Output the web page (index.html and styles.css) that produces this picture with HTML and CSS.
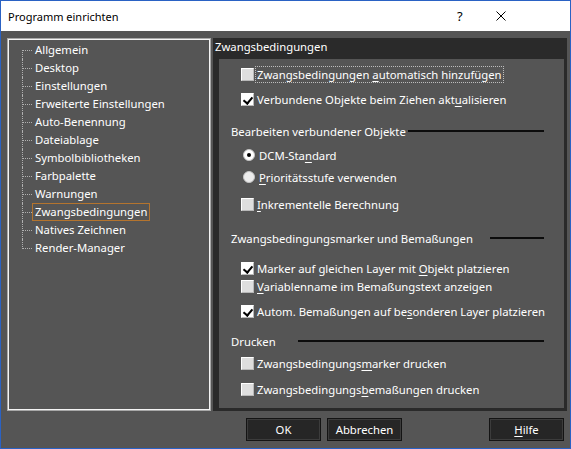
FILE: index.html
```html
<!DOCTYPE html>
<html lang="de">
<head>
<meta charset="utf-8">
<title>Programm einrichten</title>
<link rel="stylesheet" href="styles.css">
</head>
<body>
<div class="window">
  <div class="titlebar">
    <span class="title">Programm einrichten</span>
    <span class="help">?</span>
    <span class="close">
      <svg width="10" height="10" viewBox="0 0 10 10"><path d="M0.5 0.5 L9.5 9.5 M9.5 0.5 L0.5 9.5" stroke="#000" stroke-width="1" fill="none"/></svg>
    </span>
  </div>
  <div class="client">
    <div class="main">
      <div class="tree">
        <ul class="nodes">
          <li><span class="node">Allgemein</span></li>
          <li><span class="node">Desktop</span></li>
          <li><span class="node">Einstellungen</span></li>
          <li><span class="node">Erweiterte Einstellungen</span></li>
          <li><span class="node">Auto-Benennung</span></li>
          <li><span class="node">Dateiablage</span></li>
          <li><span class="node">Symbolbibliotheken</span></li>
          <li><span class="node">Farbpalette</span></li>
          <li><span class="node">Warnungen</span></li>
          <li><span class="node selected">Zwangsbedingungen</span></li>
          <li><span class="node">Natives Zeichnen</span></li>
          <li><span class="node">Render-Manager</span></li>
        </ul>
      </div>
      <div class="page">
        <div class="page-title">Zwangsbedingungen</div>
        <div class="page-body">
          <label class="opt r1"><span class="box"></span><span class="txt focus">Zwangsbedingungen <u>a</u>utomatisch hinzufügen</span></label>
          <label class="opt r2"><span class="box checked"></span><span class="txt">Verbundene Objekte beim Ziehen akt<u>u</u>alisieren</span></label>

          <div class="group g1"><span class="glabel">Bearbeiten verbundener Objekte</span><span class="rule rule-1"></span></div>
          <label class="opt r3"><span class="radio on"></span><span class="txt">DCM-Sta<u>n</u>dard</span></label>
          <label class="opt r4"><span class="radio"></span><span class="txt"><u>P</u>rioritätsstufe verwenden</span></label>
          <label class="opt r5"><span class="box"></span><span class="txt"><u>I</u>nkrementelle Berechnung</span></label>

          <div class="group g2"><span class="glabel">Zwangsbedingungsmarker und Bemaßungen</span><span class="rule rule-2"></span></div>
          <label class="opt r6"><span class="box checked"></span><span class="txt">Marker auf gleichen Layer mit <u>O</u>bjekt platzieren</span></label>
          <label class="opt r7"><span class="box"></span><span class="txt"><u>V</u>ariablenname im Bemaßungstext anzeigen</span></label>
          <label class="opt r8"><span class="box checked"></span><span class="txt">Autom. Bemaßungen auf be<u>s</u>onderen Layer platzieren</span></label>

          <div class="group g3"><span class="glabel">Drucken</span><span class="rule rule-3"></span></div>
          <label class="opt r9"><span class="box"></span><span class="txt">Zwangsbedingungs<u>m</u>arker drucken</span></label>
          <label class="opt r10"><span class="box"></span><span class="txt">Zwangsbedingungs<u>b</u>emaßungen drucken</span></label>
        </div>
      </div>
    </div>
    <div class="buttons">
      <button class="btn btn-ok">OK</button>
      <button class="btn">Abbrechen</button>
      <button class="btn btn-help"><u>H</u>ilfe</button>
    </div>
  </div>
</div>
</body>
</html>
```

FILE: styles.css
```css
* { box-sizing: border-box; }

html, body {
  margin: 0;
  padding: 0;
  background: #555555;
}

body {
  font-family: "Noto Sans", "Liberation Sans", sans-serif;
  font-size: 11.3px;
  color: #ffffff;
}

.window {
  width: 571px;
  height: 449px;
  border: 1px solid #2a62c4;
  display: flex;
  flex-direction: column;
  background: #555555;
}

/* title bar */
.titlebar {
  height: 30px;
  background: #ffffff;
  color: #000000;
  display: flex;
  align-items: center;
  padding-left: 7px;
  flex-shrink: 0;
}
.title { flex: 1; font-size: 11px; }
.help { width: 12px; font-size: 13px; margin-right: 27px; }
.close { width: 10px; height: 10px; margin-right: 64px; display: flex; }
.close svg { display: block; }

/* client area */
.client {
  flex: 1;
  display: flex;
  flex-direction: column;
  padding: 7px 3px 0 6px;
}
.main {
  height: 373px;
  display: flex;
  gap: 2px;
}

/* navigation tree */
.tree {
  width: 205px;
  border: 1px solid #a8a8a8;
  box-shadow: inset 0 0 0 1px #f4f4f4;
  padding: 2px 0 0 2px;
}
.nodes {
  list-style: none;
  margin: 0;
  padding: 0;
}
.nodes li {
  position: relative;
  height: 18px;
  display: flex;
  align-items: center;
  padding-left: 22px;
}
/* horizontal connector */
.nodes li::before {
  content: "";
  position: absolute;
  left: 12px;
  top: 9px;
  width: 10px;
  border-top: 1px dotted #b0b0b0;
}
/* vertical connector */
.nodes li::after {
  content: "";
  position: absolute;
  left: 12px;
  top: 0;
  height: 18px;
  border-left: 1px dotted #b0b0b0;
}
.nodes li:first-child::after { top: 9px; height: 9px; }
.nodes li:last-child::after { height: 10px; }

.node {
  display: inline-block;
  height: 18px;
  line-height: 16px;
  padding: 0 2px;
  border: 1px solid transparent;
  white-space: nowrap;
}
.node.selected { border-color: #b4742e; }

/* property page */
.page {
  width: 354px;
  background: #2a2a2a;
  display: flex;
  flex-direction: column;
  padding: 0 3px 3px 6px;
}
.page-title {
  height: 21px;
  line-height: 17px;
  margin-left: -4px;
}
.page-body {
  flex: 1;
  background: #555555;
  padding: 6px 20px 0 12px;
  display: flex;
  flex-direction: column;
}

.opt {
  height: 18px;
  display: flex;
  align-items: center;
  padding-left: 10px;
  white-space: nowrap;
}
.txt {
  padding: 0 1px;
  border: 1px solid transparent;
  line-height: 15px;
  margin-left: 1px;
}
.txt.focus { border: 1px dotted #bdbdbd; }
u { text-decoration-thickness: 1px; text-underline-offset: 2px; }

.box {
  width: 13px;
  height: 13px;
  flex-shrink: 0;
  background: #dedede;
  border-top: 1px solid #ffffff;
  border-left: 1px solid #ffffff;
  border-right: 1px solid #b8b8b8;
  border-bottom: 1px solid #b8b8b8;
  position: relative;
}
.box.checked { background: #ffffff; }
.box.checked::after {
  content: "";
  position: absolute;
  left: 2px;
  top: 1px;
  width: 4px;
  height: 7px;
  border-right: 2px solid #000;
  border-bottom: 2px solid #000;
  transform: translate(1px, 0) rotate(40deg);
}

.radio {
  width: 12px;
  height: 12px;
  flex-shrink: 0;
  margin-left: 2px;
  margin-right: 1px;
  border-radius: 50%;
  background: #ececec;
  border: 1px solid #c4c4c4;
  display: flex;
  align-items: center;
  justify-content: center;
}
.radio.on { background: #ffffff; }
.radio.on::after {
  content: "";
  width: 4px;
  height: 4px;
  border-radius: 50%;
  background: #000;
}

.group {
  height: 18px;
  display: flex;
  align-items: center;
  white-space: nowrap;
}
.rule {
  height: 2px;
  background: #0c0c0c;
  margin-left: auto;
  flex-shrink: 0;
}
.rule-1 { width: 136px; }
.rule-2 { width: 54px; }
.rule-3 { width: 246px; }

/* vertical rhythm of the option rows */
.r1 { margin-top: 0; }
.r2 { margin-top: 7px; }
.g1 { margin-top: 14px; }
.r3 { margin-top: 6px; }
.r4 { margin-top: 4px; }
.r5 { margin-top: 9px; }
.g2 { margin-top: 16px; }
.r6 { margin-top: 12px; }
.r7 { margin-top: 0; }
.r8 { margin-top: 7px; }
.g3 { margin-top: 12px; }
.r9 { margin-top: 4px; }
.r10 { margin-top: 8px; }

/* dialog buttons */
.buttons {
  display: flex;
  padding-top: 7px;
}
.btn {
  width: 75px;
  height: 23px;
  font-family: inherit;
  font-size: 11.3px;
  color: #ffffff;
  background: #262626;
  border: 1px solid #141414;
  box-shadow: inset 0 0 0 1px #3c3c3c;
  padding: 0;
  margin: 0;
}
.btn-ok { margin-left: 239px; margin-right: 6px; }
.btn-help { margin-left: auto; margin-right: 3px; }
```
